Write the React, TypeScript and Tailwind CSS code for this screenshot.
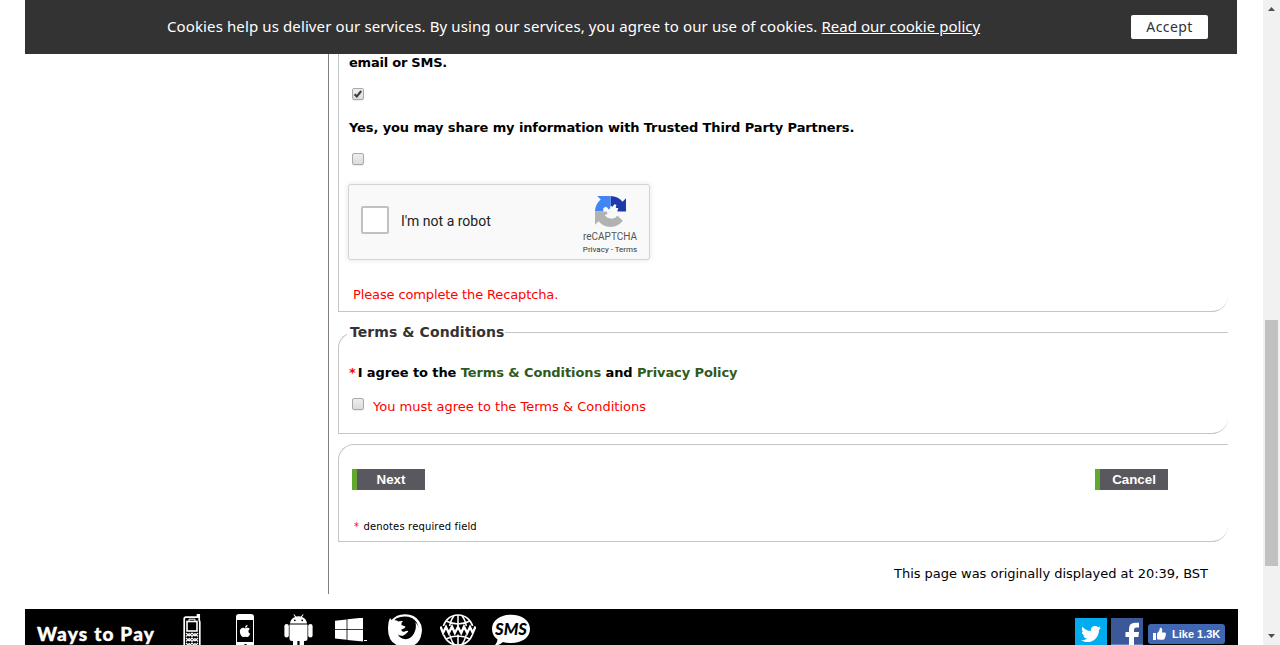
import React from "react";
import { FaApple, FaTwitter } from "react-icons/fa";

function Checkbox({ checked = false }: { checked?: boolean }) {
  return (
    <span className="flex h-3 w-3 shrink-0 items-center justify-center rounded-[2px] border border-[#a9a9a9] bg-linear-to-b from-[#eeeeee] to-[#dcdcdc] shadow-[0_1px_1px_rgba(0,0,0,0.08)]">
      {checked && (
        <svg width="10" height="10" viewBox="0 0 10 10" className="shrink-0">
          <path d="M1.5 5.2 L3.8 7.4 L8.2 2" fill="none" stroke="#3f3f3f" strokeWidth="2.1" />
        </svg>
      )}
    </span>
  );
}

function FormButton({ label }: { label: string }) {
  return (
    <button className="h-[21px] w-[73px] border-l-[5px] border-[#61a92c] text-center font-['Liberation_Sans',sans-serif] text-[13.33px] leading-[21px] font-bold text-white bg-[#58585e]">
      {label}
    </button>
  );
}

function RecaptchaLogo() {
  return (
    <svg width="31" height="31" viewBox="0 0 64 64">
      <path d="M64 31.955l-.033-1.37V4.687l-7.16 7.16C50.948 4.674 42.033.093 32.05.093L32 20L36 22L40 17L44 18L43 25L48 25L46 31.9Z" fill="#1c3aa9" />
      <path d="M31.862.094l-1.37.033H4.594l7.16 7.16C4.58 13.147 0 22.06 0 32.046L17 32L17 26L21 22L26 24L28 28L31 26L32 20Z" fill="#4285f4" />
      <path d="M.001 32.045l.033 1.37v25.898l7.16-7.16c5.86 7.173 14.774 11.754 24.76 11.754 10.4 0 19.622-4.96 25.458-12.64L46 40L42 45L35 47L26 45L20 40L26 36L24 32Z" fill="#b2b2b2" />
    </svg>
  );
}

function Recaptcha() {
  return (
    <div className="flex h-[76px] w-[302px] items-center justify-between rounded-[3px] border border-[#d3d3d3] bg-[#f9f9f9] pr-3 pl-3 font-[Roboto,sans-serif] font-normal shadow-[0_0_4px_1px_rgba(0,0,0,0.08)]">
      <div className="flex items-center gap-3 pb-1">
        <span className="h-7 w-7 rounded-[2px] border-2 border-[#c1c1c1] bg-white" />
        <span className="mt-[2px] text-[14px] leading-[17px] text-[#222222]">I'm not a robot</span>
      </div>
      <div className="flex w-[54px] flex-col items-center pt-[5px]">
        <RecaptchaLogo />
        <span className="mt-[5px] text-[10px] leading-[10px] whitespace-nowrap text-[#555555]">reCAPTCHA</span>
        <span className="mt-[4px] text-[8px] leading-[8px] whitespace-nowrap text-[#333333]">Privacy - Terms</span>
      </div>
    </div>
  );
}

function MobileIcon() {
  return (
    <svg width="19" height="34" viewBox="0 0 19 34" fill="none" stroke="#fff">
      <path d="M14.5 4 V.8 H16.2 V6 L16.8 8 V34 M1.2 34 V5 Q1.2 3.2 3 3.2 H15.5" strokeWidth="1.7" />
      <rect x="4" y="7.5" width="10" height="9.5" strokeWidth="1.6" />
      <path d="M6 7 V5.2 H12 V7" />
      <path d="M3 19 L6.2 22 L9 19 L12 22 L15 19 M3 22.5 L6.2 19.5 L9 22.5 L12 19.5 L15 22.5 M3 24 L6.2 27 L9 24 L12 27 L15 24 M3 27.5 L6.2 24.5 L9 27.5 L12 24.5 L15 27.5 M3 29 L6.2 32 L9 29 L12 32 L15 29 M3 32.5 L6.2 29.5 L9 32.5 L12 29.5 L15 32.5" strokeWidth="1.2" />
    </svg>
  );
}

function IphoneIcon() {
  return (
    <span className="flex h-[34px] w-[18px] flex-col rounded-t-[3px] bg-white pt-[6px]">
      <span className="mx-[1px] flex h-[22px] items-center justify-center bg-black text-white">
        <FaApple size={14} />
      </span>
      <span className="mx-auto mt-[2px] h-[3px] w-[3px] rounded-full bg-black" />
    </span>
  );
}

function AndroidIcon() {
  return (
    <svg width="29" height="34" viewBox="0 0 29 34" fill="#fff">
      <path d="M6 9.5 Q6.5 4.8 11 3 L9.4.6 L10.2.2 L12 2.6 Q14.5 1.9 17 2.6 L18.8.2 L19.6.6 L18 3 Q22.5 4.8 23 9.5 Z" />
      <circle cx="10.8" cy="6.3" r=".9" fill="#000" />
      <circle cx="18.2" cy="6.3" r=".9" fill="#000" />
      <path d="M5.5 10.4 H23.5 V25 Q23.5 27 21 27 H20 V34 H15.6 V27 H13.4 V34 H9 V27 H8 Q5.5 27 5.5 25 Z" />
      <rect x=".4" y="10" width="4.4" height="13.4" rx="2.2" />
      <rect x="24.2" y="10" width="4.4" height="13.4" rx="2.2" />
    </svg>
  );
}

function WindowsIcon() {
  return (
    <svg width="33" height="26" viewBox="0 0 33 26" fill="#fff">
      <path d="M0 2.8 L11.6 1.4 V11.2 H0 Z M12.4 1.3 L28 -.4 V11.2 H12.4 Z M0 12 H11.6 V21.8 L0 20.4 Z M12.4 12 H28 V23.6 L12.4 21.9 Z" />
      <rect x="29" y="22" width="3" height="1" />
    </svg>
  );
}

function FirefoxIcon() {
  return (
    <svg width="36" height="34" viewBox="0 0 36 34">
      <path d="M1 15 Q.8 8 3 4 L4.5 6 Q9 .5 18 .2 Q28 .5 32 7 Q36 12 34.6 19 Q33 33 18 33 Q1 32 1 15 Z" fill="#fff" />
      <path d="M9 4.6 Q17 .8 25 4 Q31 7.5 31.5 14 Q30.5 10 28.4 8.3 Q30 14 26.8 19.8 Q23 26.5 16 24.8 Q12 23.5 11.2 20.5 Q14 22.6 17 21.2 Q20 19 21.3 17.5 Q20.5 16.2 17.8 17.6 Q14.7 18.4 14.2 15.4 Q18.3 14.5 18.4 12.5 L14.4 10.9 Q14 8.4 16.2 7.1 Q13.2 6.5 11.2 7.5 Q10 6 7.5 6.2 Z" fill="#000" />
    </svg>
  );
}

function GlobeIcon() {
  return (
    <svg width="36" height="34" viewBox="0 0 36 34" fill="none" stroke="#fff">
      <circle cx="18" cy="16" r="15" strokeWidth="1.7" />
      <path d="M18 1 V31 M6 7 Q18 13 30 7 M6 25 Q18 19 30 25 M14 1.5 Q4.5 16 14 30.5 M22 1.5 Q31.5 16 22 30.5" strokeWidth="1.5" />
      <rect x="0" y="12" width="36" height="8.5" fill="#000" stroke="none" />
      <path d="M.5 12.5 L3 19 L6 13 L8.8 19 L12 12.5 L14.8 19 L18 13 L21.2 19 L24 12.5 L27.2 19 L30 13 L32.8 19 L35.5 12.5" strokeWidth="2.3" />
    </svg>
  );
}

function SmsIcon() {
  return (
    <svg width="40" height="34" viewBox="0 0 40 34">
      <path d="M20 .8 C31 .8 39 6.5 39 15 C39 23.5 31 29 20 29 Q15 29 12 28 Q8 31.5 3 32 Q6.5 29 6.5 25.5 Q1 21.5 1 15 C1 6.5 9 .8 20 .8 Z" fill="#fff" />
      <text x="20" y="20.5" textAnchor="middle" textLength="32" lengthAdjust="spacingAndGlyphs" fontFamily="Lato, sans-serif" fontWeight="900" fontStyle="italic" fontSize="16.5" fill="#000">SMS</text>
    </svg>
  );
}

function Footer() {
  return (
    <footer className="flex h-9 w-[1213px] shrink-0 items-start overflow-hidden bg-black pl-3 text-white">
      <span className="mt-[13px] w-[146px] font-[Lato,sans-serif] text-[19px] leading-6 font-black tracking-[1.2px] whitespace-nowrap [-webkit-text-stroke:0.4px_white]">Ways to Pay</span>
      <div className="flex pt-[5px]">
        <div className="w-[53px]"><MobileIcon /></div>
        <div className="w-12"><IphoneIcon /></div>
        <div className="w-[51px]"><AndroidIcon /></div>
        <div className="w-[52px] pt-1"><WindowsIcon /></div>
        <div className="w-[53px]"><FirefoxIcon /></div>
        <div className="w-[51px]"><GlobeIcon /></div>
        <SmsIcon />
      </div>
      <div className="mr-[13px] ml-auto flex pt-[9px]">
        <span className="flex h-8 w-8 items-center justify-center bg-[#00aced]"><FaTwitter size={20} /></span>
        <svg className="ml-1" width="32" height="32" viewBox="0 0 32 32">
          <rect width="32" height="32" fill="#3b5998" />
          <rect y="26" width="32" height="6" fill="#6d84b4" />
          <path d="M18 32 V19 H14.5 V14 H18 V11 Q18 4.8 24 4.8 H28 V9.5 H25.5 Q23 9.5 23 12 V14 H28 L27.4 19 H23 V32 Z" fill="#fff" />
        </svg>
        <span className="mt-1.5 ml-[5px] flex h-5 w-[77px] items-center rounded-[3px] bg-[#4267b2] pl-[5px] font-['Liberation_Sans',sans-serif] text-[11px] font-bold whitespace-nowrap">
          <svg width="14" height="14" viewBox="0 0 14 14" fill="#fff" className="mr-[5px]">
            <path d="M0 6 H3 V13 H0 Z M4 12.2 V6.5 Q6.8 4.2 7 .8 Q9.4 .4 9.2 3.5 L8.8 5.4 H12 Q13.5 5.8 12.7 7.2 Q13.4 8 12.4 9 Q12.9 10 11.8 10.8 Q12 12.8 10 12.8 H6.5 Z" />
          </svg>
          Like 1.3K
        </span>
      </div>
    </footer>
  );
}

export default function App() {
  return (
    <div className="flex h-[645px] w-[1280px] justify-between overflow-hidden bg-white pl-[25px] font-['DejaVu_Sans',sans-serif] text-[13px] text-black">
      <div className="flex w-[1213px] flex-col">
        <header className="flex h-[54px] w-[1212px] shrink-0 items-center bg-[#333333] pl-[142px] font-['Noto_Sans',sans-serif] text-white">
          <p className="w-[964px] pb-[2px] text-[15px] leading-5 tracking-[0.115px] whitespace-nowrap">
            Cookies help us deliver our services. By using our services, you agree to our use of cookies. <a className="tracking-[0.02px] underline">Read our cookie policy</a>
          </p>
          <button className="h-6 w-[77px] rounded-[2px] bg-white text-[14px] leading-6 tracking-[0.4px] text-[#333333]">Accept</button>
        </header>

        <div className="flex h-[555px] shrink-0">
          <aside className="h-[540px] w-[304px] shrink-0 border-r border-[#808080]" />
          <main className="ml-[9px] w-[890px]">
            <section className="flex h-[258px] flex-col items-start rounded-br-[16px] border-b border-l border-[#c5c5c5] pl-[9px] font-bold">
              <p className="pl-px leading-[17px] tracking-[-0.23px]">email or SMS.</p>
              <div className="mt-[17px] ml-1"><Checkbox checked /></div>
              <p className="mt-[19px] pl-px leading-[17px] tracking-[-0.115px]">Yes, you may share my information with Trusted Third Party Partners.</p>
              <div className="mt-[17px] ml-1"><Checkbox /></div>
              <div className="mt-[19px]"><Recaptcha /></div>
              <p className="mt-[26px] ml-[5px] leading-[17px] font-normal tracking-[-0.13px] text-[#ff0000]">Please complete the Recaptcha.</p>
            </section>

            <fieldset className="mt-[10px] h-[112px] rounded-tl-[16px] rounded-br-[16px] border-t border-b border-l border-[#c5c5c5] pl-2">
              <legend className="pl-[3px] text-[14px] leading-[21px] font-bold tracking-[0.08px] text-[#333333]">Terms &amp; Conditions</legend>
              <p className="mt-[21px] ml-[2px] leading-[17px] font-bold tracking-[-0.1px]">
                <span className="mr-[2px] text-[#ff0000]">*</span>I agree to the <a className="text-[#2f5a1c]">Terms &amp; Conditions</a> and <a className="text-[#2f5a1c]">Privacy Policy</a>
              </p>
              <div className="mt-[17px] ml-[5px] flex">
                <Checkbox />
                <span className="ml-[9px] leading-[17px] text-[#ff0000]">You must agree to the Terms &amp; Conditions</span>
              </div>
            </fieldset>

            <section className="mt-[10px] h-[98px] rounded-tl-[16px] rounded-br-[16px] border-t border-b border-l border-[#c5c5c5] pt-6 pr-[60px] pl-[13px]">
              <div className="flex justify-between">
                <FormButton label="Next" />
                <FormButton label="Cancel" />
              </div>
              <p className="mt-[30px] ml-[2px] text-[10px] leading-[14px] tracking-[0.15px]"><span className="mr-px text-[#ff0000]">*</span> denotes required field</p>
            </section>
            <p className="mt-[23px] pr-5 text-right leading-[17px] tracking-[-0.025px]">This page was originally displayed at 20:39, BST</p>
          </main>
        </div>
        <Footer />
      </div>

      <div className="flex w-[17px] flex-col items-center bg-[#f1f1f1]">
        <svg width="7" height="4" viewBox="0 0 7 4" className="mt-[7px]"><path d="M0 4 L3.5 0 L7 4 Z" fill="#505050" /></svg>
        <div className="mt-[309px] h-[246px] w-[13px] bg-[#c1c1c1]" />
        <svg width="7" height="4" viewBox="0 0 7 4" className="mt-[68px]"><path d="M0 0 H7 L3.5 4 Z" fill="#505050" /></svg>
      </div>
    </div>
  );
}
